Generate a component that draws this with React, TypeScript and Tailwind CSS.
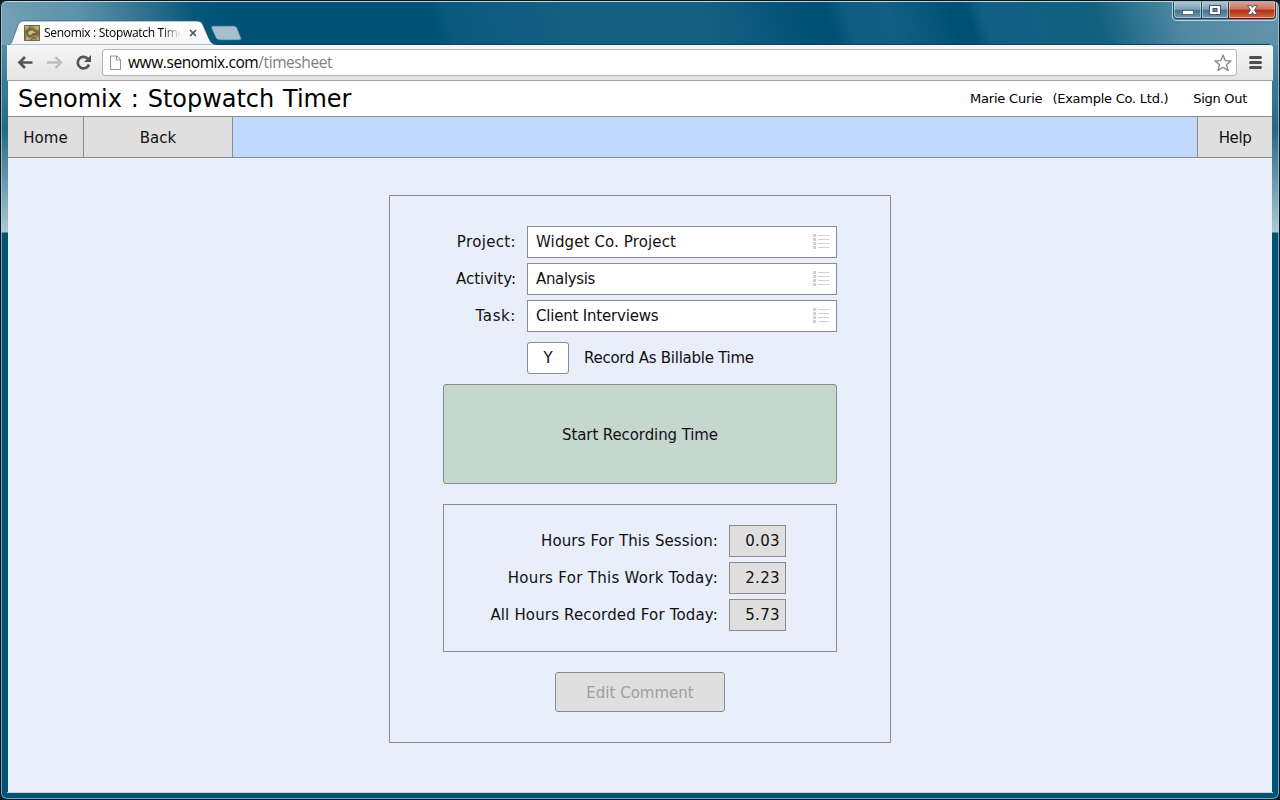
import React from "react";

const uiFont = "font-['Open_Sans','Noto_Sans',sans-serif]";

function TitleBar() {
  return (
    <div className="relative h-[45px] w-full shrink-0">
      <svg className="absolute inset-0" width="1280" height="45" viewBox="0 0 1280 45">
        <defs>
          <linearGradient id="glass" x1="0" y1="0" x2="1280" y2="0" gradientUnits="userSpaceOnUse" gradientTransform="skewX(14)">
            <stop offset="0" stopColor="#73a0b4" />
            <stop offset="0.06" stopColor="#5b91a8" />
            <stop offset="0.11" stopColor="#32718f" />
            <stop offset="0.15" stopColor="#07577b" />
            <stop offset="0.18" stopColor="#005277" />
            <stop offset="1" stopColor="#005277" />
          </linearGradient>
          <linearGradient id="glassRight" x1="240" y1="0" x2="1280" y2="0" gradientUnits="userSpaceOnUse" gradientTransform="skewX(18)">
            <stop offset="0" stopColor="#005277" />
            <stop offset="0.178" stopColor="#005277" />
            <stop offset="0.193" stopColor="#09587d" />
            <stop offset="0.31" stopColor="#156083" />
            <stop offset="0.44" stopColor="#156083" />
            <stop offset="0.545" stopColor="#005075" />
            <stop offset="0.56" stopColor="#005075" />
            <stop offset="0.578" stopColor="#0e5c80" />
            <stop offset="0.62" stopColor="#135f84" />
            <stop offset="0.68" stopColor="#005075" />
            <stop offset="0.695" stopColor="#005075" />
            <stop offset="0.71" stopColor="#125f85" />
            <stop offset="0.82" stopColor="#12617f" />
            <stop offset="0.9" stopColor="#518aa3" />
            <stop offset="1" stopColor="#6594aa" />
          </linearGradient>
          <linearGradient id="tab" x1="0" y1="0" x2="0" y2="1">
            <stop offset="0" stopColor="#fff" />
            <stop offset="1" stopColor="#f6f6f6" />
          </linearGradient>
        </defs>
        <rect width="1280" height="45" fill="url(#glass)" />
        <rect x="250" width="1030" height="45" fill="url(#glassRight)" />
        <rect width="1280" height="1" fill="#02131c" />
        <rect x="3" y="1" width="1274" height="1" fill="#d9e8f0" />
        <path d="M8 45C12 44 12 41 14 36L18 25Q19.500 21 23 21H197Q201 21 202.500 24L209 39Q211 44 216 45Z" fill="url(#tab)" stroke="#286079" strokeWidth="0.7" />
        <path d="M213 26H234Q236 26 237 28L241 38Q242 40 239 40H220Q217 40 216 38L211.500 28Q211 26 213 26Z" fill="#a5bfcc" stroke="#41718a" strokeWidth="0.7" />
        <rect x="216" y="44" width="1054" height="1" fill="#0c4460" />
      </svg>
      <div className={"absolute left-[24px] top-[23px] flex h-5 w-[176px] items-center text-[12px] text-black " + uiFont}>
        <svg width="16" height="16" viewBox="0 0 16 16" className="shrink-0">
          <rect width="16" height="16" fill="#9b8b5a" />
          <path d="M0 0H5L4 3L1 5ZM9 0H16V4L12 5L10 2ZM0 12L5 11L7 14L4 16H0ZM12 13L16 10V16H10Z" fill="#b5a573" />
          <path d="M2 5L6 3L10 4L14 7L15 12L12 10L8 11L5 13L3 10L1 8Z" fill="#75653a" />
          <path d="M4 7L8 5L12 8L9 8L7 10L5 10ZM1 1L3 1L2 3ZM12 1L14 2L13 4Z" fill="#c8b983" />
          <path d="M1 15L2 10M7 15L9 12L13 14M5 1L7 2M14 5V8M0.500 0.500H15.500V15.500H0.500Z" stroke="#685a32" fill="none" strokeWidth=".8" />
        </svg>
        <span className="ml-1 w-[137px] overflow-hidden whitespace-nowrap tracking-[-0.3px] [mask-image:linear-gradient(to_right,black_86%,transparent)]">Senomix : Stopwatch Timer</span>
        <svg className="ml-[8px] shrink-0" width="8" height="8" viewBox="0 0 8 8"><path d="M1 1L7 7M7 1L1 7" stroke="#555" strokeWidth="1.700" /></svg>
      </div>
      <svg className="absolute left-[1171px] top-0" width="109" height="22" viewBox="0 0 109 22">
        <defs>
          <linearGradient id="control" x1="0" y1="0" x2="0" y2="1">
            <stop offset="0" stopColor="#b2cad6" /><stop offset=".48" stopColor="#7c9fb2" /><stop offset=".5" stopColor="#3d718d" /><stop offset="1" stopColor="#719caf" />
          </linearGradient>
          <linearGradient id="closeControl" x1="0" y1="0" x2="0" y2="1">
            <stop offset="0" stopColor="#dda79c" /><stop offset=".48" stopColor="#ca6e5e" /><stop offset=".5" stopColor="#ac2811" /><stop offset="1" stopColor="#d66e43" />
          </linearGradient>
        </defs>
        <path d="M1.500 1V16Q1.500 20.500 6 20.500H101Q105.500 20.500 105.500 16V1" fill="none" stroke="#bad3dd" />
        <path d="M2.500 1H30.500V18.500H6Q2.500 18.500 2.500 15ZM30.500 1H57.500V18.500H30.500Z" fill="url(#control)" stroke="#163f58" />
        <path d="M57.500 1H104.500V15Q104.500 18.500 101 18.500H57.500Z" fill="url(#closeControl)" stroke="#4c1a1a" />
        <path d="M3.500 2V15Q3.500 17.500 6 17.500H29.500V2M31.500 2V17.500H56.500V2M58.500 2V17.500H101Q103.500 17.500 103.500 15V2" fill="none" stroke="#ffffff77" />
        <rect x="11.500" y="10.500" width="11" height="4" fill="#fff" stroke="#4d4f63" strokeWidth=".8" />
        <rect x="38.500" y="5.500" width="11" height="9" fill="#fff" stroke="#4d4f63" />
        <rect x="42" y="8.500" width="4" height="3" fill="#608ba2" stroke="#4d4f63" />
        <path d="M76.500 5.500H80L81.500 7.500L83 5.500H86.500L83.500 10L86.500 14.500H83L81.500 12.500L80 14.500H76.500L79.500 10Z" fill="#fff" stroke="#53505f" strokeWidth=".9" />
      </svg>
    </div>
  );
}

function BrowserBar() {
  return (
    <div className="flex h-[36px] shrink-0 items-center rounded-tr-[3px] border-b border-[#a3a3a3] bg-linear-to-b from-[#f6f6f6] to-[#e4e4e4]">
      <svg width="94" height="35" viewBox="7 45 94 35" className="shrink-0" fill="none">
        <path d="M32.500 62.500H20M25 57L19.500 62.500L25 68" stroke="#545454" strokeWidth="2.700" />
        <path d="M47 62.500H60M55.500 57L61 62.500L55.500 68" stroke="#bdbdbd" strokeWidth="2.300" />
        <path d="M88.300 59.300A5.800 5.800 0 1 0 89 64.500" stroke="#545454" strokeWidth="2.700" />
        <path d="M91 55V62H84Z" fill="#545454" />
      </svg>
      <div className={"ml-px flex h-[27px] w-[1135px] items-center rounded-[3px] border border-[#b5b5b5] bg-white text-[15.500px] " + uiFont}>
        <svg className="ml-[6px]" width="13" height="16" viewBox="0 0 13 16" fill="none" stroke="#929292"><path d="M1.500 1H8L11.500 4.500V14.500H1.500ZM7.500 1V5H11.500" /></svg>
        <span className="ml-[6px] w-[300px] whitespace-nowrap text-black tracking-[-0.42px]">www.senomix.com<span className="text-[#808080]">/timesheet</span></span>
        <svg className="ml-auto mr-[3px]" width="20" height="20" viewBox="0 0 20 20"><path d="M10 2L12.200 7.600L18 8L13.500 11.800L15 17.500L10 14.300L5 17.500L6.500 11.800L2 8L7.800 7.600Z" fill="#fff" stroke="#858585" strokeWidth="1.300" strokeLinejoin="round" /></svg>
      </div>
      <svg className="ml-[11px]" width="15" height="15" viewBox="0 0 15 15"><path d="M2.500 2.500H12.500M2.500 7.500H12.500M2.500 12.500H12.500" stroke="#505050" strokeWidth="3" strokeLinecap="round" /></svg>
    </div>
  );
}

type RowProps = { label: string; value: string; labelClass?: string; valueClass?: string };

function SelectRow({ label, value, labelClass = "", valueClass = "" }: RowProps) {
  return (
    <div className="flex h-8 items-center">
      <span className={"w-[73px] whitespace-nowrap text-right " + labelClass}>{label}</span>
      <div className="ml-[11px] flex h-8 w-[310px] items-center justify-between border border-[#8c8c8c] bg-white pl-2 pr-[7px]">
        <span className={valueClass}>{value}</span>
        <svg className="mb-px" width="16" height="15" viewBox="0 0 16 15" fill="#d0d0d0" shapeRendering="crispEdges"><path d="M0 0H3V3H0ZM0 4H3V7H0ZM0 8H3V11H0ZM0 12H3V15H0ZM5 1H16V2H5ZM5 5H16V6H5ZM5 9H16V10H5ZM5 13H16V14H5Z" /></svg>
      </div>
    </div>
  );
}

function HoursRow({ label, value, labelClass = "" }: RowProps) {
  return (
    <div className="flex h-8 items-center justify-end">
      <span className={"whitespace-nowrap " + labelClass}>{label}</span>
      <span className="ml-[11px] flex h-8 w-[57px] items-center justify-end border border-[#8c8c8c] bg-[#dfdfdf] pr-[5px] tracking-[0.35px]">{value}</span>
    </div>
  );
}

export default function App() {
  return (
    <div className="relative flex h-[800px] w-[1280px] flex-col overflow-hidden bg-[linear-gradient(#72a0b4_0,#397d9a_80px,#246985_130px,#acc8d2_232px,#005277_233px)] font-['DejaVu_Sans',sans-serif] text-[15px] text-[#111]">
      <TitleBar />
      <div className="mx-[7px] flex h-[748px] flex-col border-b border-[#cbd1d5]">
        <BrowserBar />
        <main className="mx-px flex min-h-0 flex-1 flex-col bg-[#e8eefa]">
          <header className="flex h-[36px] shrink-0 items-center border-b border-[#8c8c8c] bg-white pl-[10px] pr-[25px] text-[13px] tracking-[-0.25px] text-black">
            <h1 className="text-[24px] tracking-[-0.05px] [word-spacing:1.4px]">Senomix : Stopwatch Timer</h1>
            <span className="ml-auto tracking-[-0.2px]">Marie Curie</span><span className="ml-[10px]">(Example Co. Ltd.)</span><span className="ml-[25px] tracking-[-0.3px]">Sign Out</span>
          </header>
          <nav className="flex h-[41px] shrink-0 border-b border-[#8c8c8c] bg-[#c0daff]">
            <button className="w-[76px] border-r border-[#8c8c8c] bg-[#dfdfdf] pt-[2px]">Home</button>
            <button className="w-[149px] border-r border-[#8c8c8c] bg-[#dfdfdf] pt-[2px]">Back</button>
            <button className="ml-auto w-[75px] border-l border-[#8c8c8c] bg-[#dfdfdf] pt-[2px] tracking-[-0.4px]">Help</button>
          </nav>
          <section className="ml-[381px] mt-[37px] h-[548px] w-[502px] shrink-0 border border-[#8c8c8c] px-[53px] pt-[30px]">
            <div className="flex flex-col gap-[5px]">
              <SelectRow label="Project:" value="Widget Co. Project" labelClass="tracking-[0.35px]" valueClass="tracking-[0.12px]" />
              <SelectRow label="Activity:" value="Analysis" valueClass="tracking-[-0.35px]" />
              <SelectRow label="Task:" value="Client Interviews" labelClass="tracking-[0.6px]" valueClass="tracking-[-0.2px]" />
            </div>
            <div className="ml-[84px] mt-[10px] flex h-8 items-center">
              <button className="h-8 w-[42px] rounded-[3px] border border-[#8c8c8c] bg-white">Y</button>
              <span className="ml-[15px] whitespace-nowrap tracking-[-0.26px]">Record As Billable Time</span>
            </div>
            <button className="mt-[10px] block h-[100px] w-full rounded-[3px] border border-[#8c8c8c] bg-[#c6d7cf] pt-[2px] tracking-[-0.1px]">Start Recording Time</button>
            <div className="mt-5 flex h-[148px] flex-col gap-[5px] border border-[#8c8c8c] pr-[50px] pt-5">
              <HoursRow label="Hours For This Session:" value="0.03" labelClass="tracking-[0.1px]" />
              <HoursRow label="Hours For This Work Today:" value="2.23" labelClass="tracking-[0.3px]" />
              <HoursRow label="All Hours Recorded For Today:" value="5.73" labelClass="tracking-[0.16px]" />
            </div>
            <button className="mx-auto mt-5 block h-10 w-[170px] rounded-[3px] border border-[#8c8c8c] bg-[#dfdfdf] pt-[2px] text-[#a0a0a0]">Edit Comment</button>
          </section>
        </main>
      </div>
      <div className="pointer-events-none absolute inset-0 rounded-[7px] border border-[#06141c] shadow-[inset_0_0_0_1px_#b4d2dfaa,0_0_0_8px_#101820]" />
    </div>
  );
}
